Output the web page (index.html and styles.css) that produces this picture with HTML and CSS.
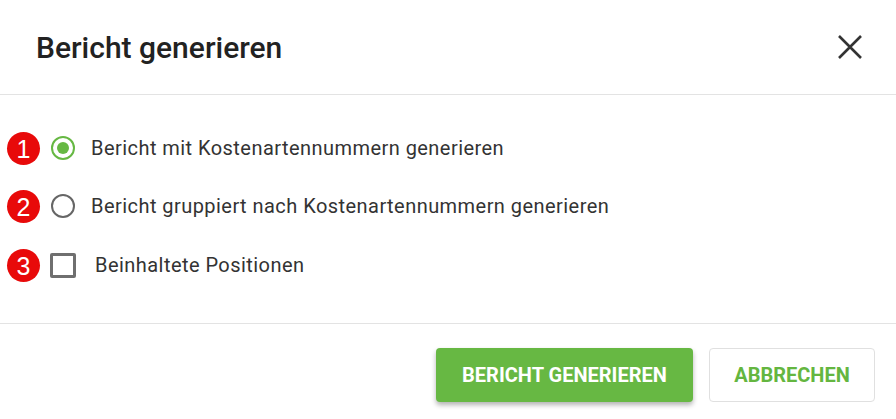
FILE: index.html
```html
<!DOCTYPE html>
<html lang="de">
<head>
<meta charset="utf-8">
<title>Bericht generieren</title>
<link rel="stylesheet" href="styles.css">
</head>
<body>
<div class="dialog">
  <header class="header">
    <h1 class="title">Bericht generieren</h1>
    <button class="close" aria-label="Schließen">
      <svg width="26" height="26" viewBox="0 0 26 26"><path d="M2 2 L24 24 M24 2 L2 24" stroke="#333" stroke-width="2.6" stroke-linecap="butt" fill="none"/></svg>
    </button>
  </header>
  <main class="body">
    <div class="row">
      <span class="badge">1</span>
      <span class="radio checked"><span class="dot"></span></span>
      <span class="label">Bericht mit Kostenartennummern generieren</span>
    </div>
    <div class="row">
      <span class="badge">2</span>
      <span class="radio"></span>
      <span class="label">Bericht gruppiert nach Kostenartennummern generieren</span>
    </div>
    <div class="row row-check">
      <span class="badge">3</span>
      <span class="checkbox"></span>
      <span class="label">Beinhaltete Positionen</span>
    </div>
  </main>
  <footer class="footer">
    <button class="btn btn-primary">BERICHT GENERIEREN</button>
    <button class="btn btn-secondary">ABBRECHEN</button>
  </footer>
</div>
</body>
</html>
```
FILE: styles.css
```css
html, body {
  margin: 0;
  padding: 0;
  background: #fff;
}
body {
  font-family: Roboto, "Liberation Sans", sans-serif;
  color: #333;
}
.dialog {
  width: 896px;
  height: 419px;
  display: flex;
  flex-direction: column;
}
.header {
  height: 95px;
  border-bottom: 1px solid #e3e3e3;
  display: flex;
  align-items: center;
  justify-content: space-between;
  padding: 0 33px 0 36px;
  box-sizing: border-box;
}
.title {
  margin: 0;
  font-size: 30px;
  font-weight: 500;
  color: #222;
}
.close {
  border: 0;
  background: none;
  padding: 0;
  width: 26px;
  height: 26px;
  display: flex;
}
.body {
  height: 229px;
  border-bottom: 1px solid #e3e3e3;
  box-sizing: border-box;
  padding: 41px 0 0 51px;
  display: flex;
  flex-direction: column;
  gap: 34px;
}
.row {
  position: relative;
  display: flex;
  align-items: center;
  height: 24px;
}
.badge {
  position: absolute;
  left: -44px;
  top: -4px;
  width: 33px;
  height: 33px;
  border-radius: 50%;
  background: #e80a0a;
  color: #fff;
  font-size: 25px;
  line-height: 34px;
  text-align: center;
  font-family: "Liberation Sans", Arial, sans-serif;
}
.radio {
  width: 24px;
  height: 24px;
  border: 2px solid #666;
  border-radius: 50%;
  box-sizing: border-box;
  display: flex;
  align-items: center;
  justify-content: center;
  flex: none;
}
.radio.checked {
  border-color: #66b843;
}
.dot {
  width: 12px;
  height: 12px;
  border-radius: 50%;
  background: #66b843;
}
.label {
  margin-left: 16px;
  font-size: 20px;
  letter-spacing: 0.45px;
  color: #333;
}
.row-check {
  margin-top: 1px;
}
.checkbox {
  width: 26px;
  height: 25px;
  border: 3px solid #6f6f6f;
  border-radius: 2px;
  box-sizing: border-box;
  margin-left: -1px;
  flex: none;
}
.row-check .label {
  margin-left: 19px;
}
.footer {
  flex: 1;
  display: flex;
  justify-content: flex-end;
  align-items: flex-start;
  padding: 24px 21px 0 0;
  gap: 16px;
}
.btn {
  height: 54px;
  font-family: Roboto, "Liberation Sans", sans-serif;
  font-size: 20px;
  font-weight: 700;
  border-radius: 4px;
  cursor: pointer;
}
.btn-primary {
  width: 257px;
  background: #67b843;
  color: #fff;
  border: 0;
  box-shadow: 0 3px 5px rgba(0, 0, 0, 0.3);
}
.btn-secondary {
  width: 166px;
  background: #fff;
  color: #64b640;
  border: 1px solid #e0e0e0;
}
```
